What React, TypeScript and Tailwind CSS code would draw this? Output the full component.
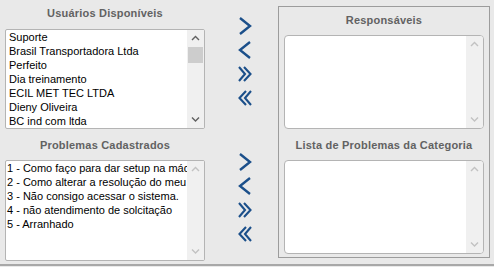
import React from 'react'

// ── small drawings ─────────────────────────────────────────────────────────

function ScrollArrow({ dir, active }: { dir: 'up' | 'down'; active: boolean }) {
  const pts = dir === 'up' ? '1,5 4.5,1.5 8,5' : '1,1.5 4.5,5 8,1.5'
  return (
    <svg width="9" height="7" viewBox="0 0 9 7">
      <polyline points={pts} fill="none" stroke={active ? '#606060' : '#c2c2c2'} strokeWidth="1.4" />
    </svg>
  )
}

function Scrollbar({ active }: { active: boolean }) {
  return (
    <div className="flex flex-col w-[17px] shrink-0 bg-[#f0f0f0]">
      <div className="h-[17px] flex items-center justify-center">
        <ScrollArrow dir="up" active={active} />
      </div>
      <div className="flex-1">
        {active && <div className="h-[16px] mx-[1px] bg-[#cdcdcd]" />}
      </div>
      <div className="h-[17px] flex items-center justify-center">
        <ScrollArrow dir="down" active={active} />
      </div>
    </div>
  )
}

type Move = 'one' | 'back' | 'all' | 'allBack'

function MoveIcon({ kind }: { kind: Move }) {
  const common = { fill: 'none', stroke: '#1b4f8a', strokeWidth: 2.4, strokeLinejoin: 'miter' as const }
  if (kind === 'one') return <svg width="14" height="18" viewBox="0 0 14 18"><polyline points="2,1 12,9 2,17" {...common} /></svg>
  if (kind === 'back') return <svg width="14" height="18" viewBox="0 0 14 18"><polyline points="12,1 2,9 12,17" {...common} /></svg>
  if (kind === 'all')
    return (
      <svg width="14" height="18" viewBox="0 0 14 18">
        <polyline points="1,2 7,9 1,16" {...common} strokeWidth={2.1} />
        <polyline points="6,2 12.5,9 6,16" {...common} strokeWidth={2.1} />
      </svg>
    )
  return (
    <svg width="14" height="18" viewBox="0 0 14 18">
      <polyline points="13,2 7,9 13,16" {...common} strokeWidth={2.1} />
      <polyline points="8,2 1.5,9 8,16" {...common} strokeWidth={2.1} />
    </svg>
  )
}

function MoveButtons({ className }: { className: string }) {
  return (
    <div className={`flex flex-col items-center gap-[6px] ${className}`}>
      {(['one', 'back', 'all', 'allBack'] as Move[]).map(k => (
        <button key={k} className="w-[14px] h-[18px] flex items-center justify-center">
          <MoveIcon kind={k} />
        </button>
      ))}
    </div>
  )
}

// ── list box ───────────────────────────────────────────────────────────────

interface ListProps {
  items: string[]
  height: string
  pad: string
  scroll: boolean
  rounded?: boolean
}

function ListBox({ items, height, pad, scroll, rounded }: ListProps) {
  return (
    <div className={`flex ${height} bg-white border border-[#b4b4b4] overflow-hidden ${rounded ? 'rounded-[4px]' : 'rounded-[2px]'}`}>
      <div className={`flex-1 min-w-0 overflow-hidden ${pad}`}>
        {items.map(it => (
          <div key={it} className="h-[14px] leading-[14px] whitespace-nowrap text-[11px] text-black">{it}</div>
        ))}
      </div>
      <Scrollbar active={scroll} />
    </div>
  )
}

function Title({ children, className }: { children: React.ReactNode; className: string }) {
  return (
    <div className={`text-center text-[11px] leading-[14px] font-bold tracking-[0.2px] text-[#626262] ${className}`}>
      {children}
    </div>
  )
}

const usuarios = [
  'Suporte',
  'Brasil Transportadora Ltda',
  'Perfeito',
  'Dia treinamento',
  'ECIL MET TEC LTDA',
  'Dieny Oliveira',
  'BC ind com ltda',
]

const problemas = [
  '1 - Como faço para dar setup na máquina?',
  '2 - Como alterar a resolução do meu monitor',
  '3 - Não consigo acessar o sistema.',
  '4 - não atendimento de solcitação',
  '5 - Arranhado',
]

export default function App() {
  return (
    <div
      className="w-[494px] h-[267px] bg-[#e9e9e9] overflow-hidden"
      style={{ fontFamily: '"Liberation Sans", Arial, sans-serif' }}
    >
      <div className="flex h-[264px] pl-[5px]">
        {/* left column */}
        <div className="w-[200px] flex flex-col">
          <Title className="h-[29px] pt-[6px]">Usuários Disponíveis</Title>
          <ListBox items={usuarios} height="h-[100px]" pad="pl-[3px]" scroll />
          <Title className="h-[31px] pt-[9px]">Problemas Cadastrados</Title>
          <ListBox items={problemas} height="h-[101px]" pad="pl-[1px]" scroll={false} />
        </div>

        {/* move buttons */}
        <div className="w-[73px] flex flex-col pl-[7px]">
          <MoveButtons className="pt-[17px]" />
          <MoveButtons className="pt-[46px]" />
        </div>

        {/* right box */}
        <div className="mt-[6px] w-[212px] h-[252px] border border-[#9c9c9c] px-[5px] flex flex-col">
          <Title className="h-[28px] pt-[6px]">Responsáveis</Title>
          <ListBox items={[]} height="h-[94px]" pad="" scroll={false} rounded />
          <Title className="h-[31px] pt-[9px]">Lista de Problemas da Categoria</Title>
          <ListBox items={[]} height="h-[94px]" pad="" scroll={false} rounded />
        </div>
      </div>
      <div className="h-[2px] bg-[#a8a8a8]" />
    </div>
  )
}
